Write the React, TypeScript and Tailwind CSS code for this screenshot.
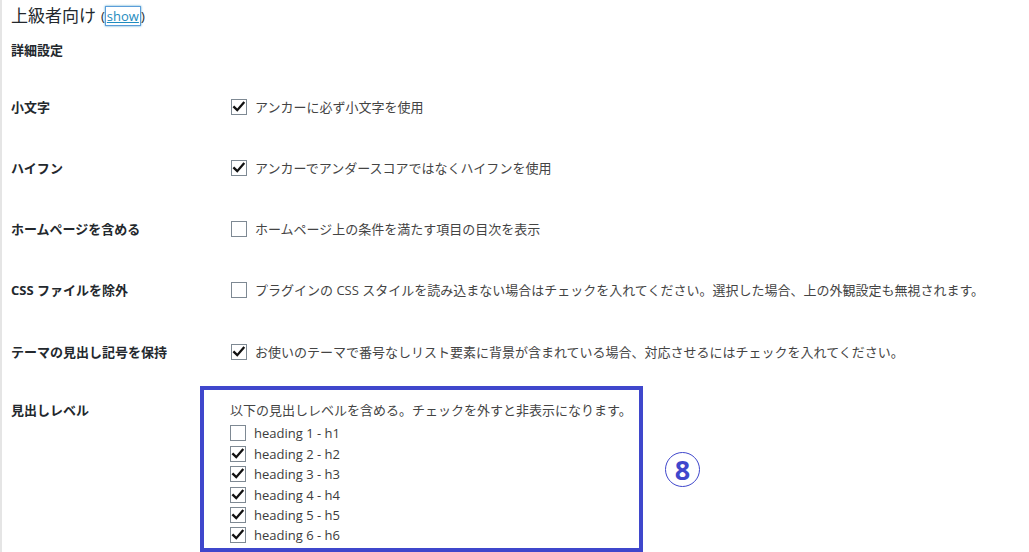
import React from 'react';

const JP = { fontFamily: '"Open Sans", "Noto Sans CJK JP", sans-serif' };

function Check({ checked }: { checked: boolean }) {
  return (
    <span className="w-4 h-4 shrink-0 border border-[#7e8993] bg-white flex items-center justify-center">
      {checked && (
        <svg viewBox="0 0 16 16" className="w-[14px] h-[14px]">
          <path d="M2.5 8.2 L6 11.6 L13.2 3.2" fill="none" stroke="#111" strokeWidth="2.6" strokeLinecap="square" />
        </svg>
      )}
    </span>
  );
}

const rows = [
  { label: '小文字', checked: true, text: 'アンカーに必ず小文字を使用' },
  { label: 'ハイフン', checked: true, text: 'アンカーでアンダースコアではなくハイフンを使用' },
  { label: 'ホームページを含める', checked: false, text: 'ホームページ上の条件を満たす項目の目次を表示' },
  {
    label: 'CSS ファイルを除外',
    checked: false,
    text: 'プラグインの CSS スタイルを読み込まない場合はチェックを入れてください。選択した場合、上の外観設定も無視されます。',
  },
  {
    label: 'テーマの見出し記号を保持',
    checked: true,
    text: 'お使いのテーマで番号なしリスト要素に背景が含まれている場合、対応させるにはチェックを入れてください。',
  },
];

const headings = [1, 2, 3, 4, 5, 6];

export default function App() {
  return (
    <div className="min-h-[552px] w-[1029px] bg-white border-l-2 border-[#e5e5e5] text-[#23282d]" style={JP}>
      <div className="pl-[9px]">
        {/* Title */}
        <div className="h-[32px] flex items-center">
          <span className="text-[17px] leading-[20px]">上級者向け</span>
          <span className="text-[13px] leading-[20px] ml-[5px] flex items-center">
            (
            <span className="text-[#1e8cbe] underline border border-[#5b9dd9] shadow-[0_0_2px_rgba(30,140,190,0.8)] px-[1px] leading-[18px]">
              show
            </span>
            )
          </span>
        </div>
        <div className="h-[30px] pt-[8px] text-[13px] leading-[20px] font-bold">詳細設定</div>
        <div className="h-[14px]" />

        {/* Settings rows */}
        {rows.map((r) => (
          <div key={r.label} className="h-[61.25px] flex items-center text-[13px] leading-[20px]">
            <div className="w-[220px] shrink-0 font-bold">{r.label}</div>
            <Check checked={r.checked} />
            <span className="ml-[8px] text-[#444]">{r.text}</span>
          </div>
        ))}

        {/* Heading levels */}
        <div className="flex items-start text-[13px] leading-[20px]">
          <div className="w-[189px] shrink-0 font-bold pt-[18px]">見出しレベル</div>
          <div className="flex items-center mt-[4px]">
            <div className="w-[443px] h-[166px] border-4 border-[#3f47cc] pl-[26px] pt-[10px]">
              <div className="text-[#444]">以下の見出しレベルを含める。チェックを外すと非表示になります。</div>
              <div className="mt-[3px]">
                {headings.map((h) => (
                  <div key={h} className="h-[20.4px] flex items-center">
                    <Check checked={h !== 1} />
                    <span className="ml-[8px] text-[#3c3c3c]">{`heading ${h} - h${h}`}</span>
                  </div>
                ))}
              </div>
            </div>
            <div className="ml-[22px] w-[35px] h-[35px] rounded-full border-[1.5px] border-[#3f47cc] flex items-center justify-center">
              <span className="text-[#3f47cc] font-bold text-[27px] leading-none">8</span>
            </div>
          </div>
        </div>
      </div>
    </div>
  );
}
